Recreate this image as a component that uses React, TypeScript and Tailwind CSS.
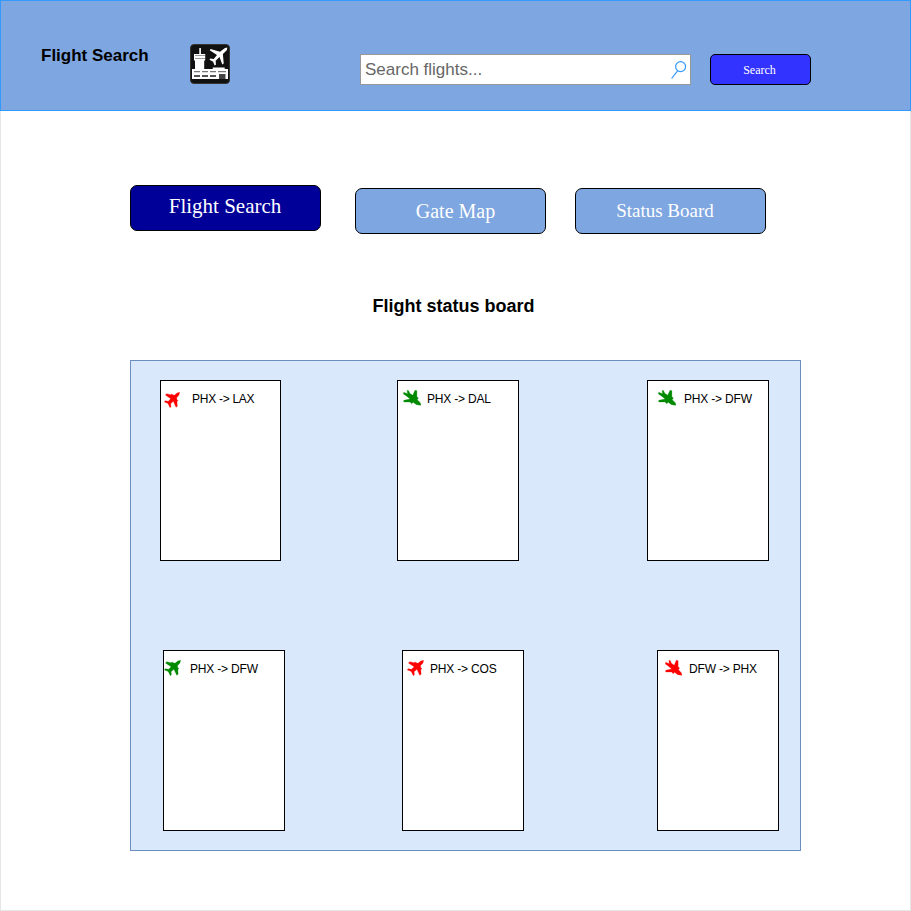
import React from "react";

type Direction = "up" | "down";

function Plane({ direction, className }: { direction: Direction; className: string }) {
  return (
    <svg viewBox="0 0 48 48" preserveAspectRatio="none" className={`block shrink-0 ${className}`} fill="currentColor" stroke="currentColor" strokeWidth="0.8" strokeLinejoin="round">
      {direction === "up" ? (
        <path d="M47 1 L39 3 L31 10 L26 8 L23 6 L20 8 L8 5 L4 9 L20 20 L13 28 L3 26 L1 30 L11 34 L13 37 L18 47 L21 44 L20 35 L28 28 L36 46 L40 43 L39 29 L42 26 L39 23 L38 17 L45 9 Z" />
      ) : (
        <path d="M48 46 L46 38 L38 29 L41 24 L37 20 L37 2 L32 1 L26 16 L18 10 L15 2 L11 1 L12 11 L2 7 L1 12 L9 18 L19 27 L2 31 L2 36 L19 36 L23 41 L27 37 L36 44 Z" />
      )}
    </svg>
  );
}

function FlightCard({ route, direction, card, plane, text }: { route: string; direction: Direction; card: string; plane: string; text: string }) {
  return (
    <article className={`flex h-[181px] items-start border border-black bg-white ${card}`}>
      <Plane direction={direction} className={plane} />
      <span className={`mt-[10px] whitespace-nowrap text-[12px] leading-4 ${text}`}>{route}</span>
    </article>
  );
}

function AirportIcon() {
  return (
    <svg viewBox="0 0 40 40" className="ml-[41px] mt-[43px] block size-10">
      <rect x=".5" y=".5" width="39" height="39" rx="3.5" fill="#111" stroke="#333" />
      <path d="M9.3 4h1.6v6h4.3v6l-1 1v8h8.5v-1.5h12V25H38v10H2V25h3v-8l-1-1v-6h5.3z" fill="#fff" />
      <path d="M5 11.5h10M5 14.5h10" stroke="#999" strokeWidth="1.2" />
      <path d="M4 27.6h6M12 27.6h6M20 27.6h6M28 27.6h8" stroke="#777" strokeWidth="1.2" />
      <path d="M4 32h6M12 32h6M20 32h6" stroke="#555" strokeWidth="2" />
      <path d="M29 30h6.5v5H29z" fill="#444" />
      <path d="M37.3 3.5 35 4l-5 3.8L20.5 5l-.8 1.2L27 11l-3.3 4-3.5-.5-.7 1.2 3.6 2 1.5 3.8 1.3-.8-.2-4L29.5 13l2.8 7.5 1.4-1-.8-9.5L37 6z" fill="#fff" />
    </svg>
  );
}

export default function App() {
  return (
    <div className="h-[911px] w-[911px] overflow-hidden bg-white font-['Liberation_Sans',Arial,sans-serif] text-black">
      <header className="flex h-[111px] items-start border border-[#3399ff] bg-[#7ea6e0]">
        <h1 className="ml-10 mt-[45px] w-[108px] whitespace-nowrap text-[17px] font-bold leading-5">Flight Search</h1>
        <AirportIcon />
        <div className="ml-[130px] mt-[53px] flex h-[31px] w-[331px] items-center border border-[#999] bg-white pl-1 text-[17px] text-[#666]">
          <span className="grow">Search flights...</span>
          <svg viewBox="0 0 16 18" className="mr-[3px] h-[18px] w-4" fill="none" stroke="#3399ff" strokeWidth="1.2">
            <circle cx="9.6" cy="5.6" r="5" />
            <path d="m6.6 9.8-6 7.7" />
          </svg>
        </div>
        <button className="ml-[19px] mt-[53px] h-[31px] w-[101px] rounded-[5px] border border-black bg-[#3333ff] pr-[2px] font-['Liberation_Serif',serif] text-[12px] text-white">Search</button>
      </header>
      <main className="h-[800px] border-x border-b border-[#e6e6e6] px-[129px]">
        <nav className="flex items-start pt-[74px] font-['Liberation_Serif',serif] text-white">
          <button className="h-[46px] w-[191px] rounded-[7px] border border-black bg-[#000099] pb-[2px] pr-px text-[21px]">Flight Search</button>
          <button className="ml-[34px] mt-[3px] h-[46px] w-[191px] rounded-[7px] border border-black bg-[#7ea6e0] pl-[10px] text-[20px]">Gate Map</button>
          <button className="ml-[29px] mt-[3px] h-[46px] w-[191px] rounded-[7px] border border-black bg-[#7ea6e0] pr-[11px] pt-px text-[19px]">Status Board</button>
        </nav>
        <h2 className="ml-[242.5px] mt-[61px] h-[22px] whitespace-nowrap text-[18px] font-bold leading-[22px]">Flight status board</h2>
        <section className="mt-[43px] h-[491px] w-[671px] border border-[#6c8ebf] bg-[#dae8fc] pt-[19px]">
          <div className="flex">
            <FlightCard route="PHX -> LAX" direction="up" card="ml-[29px] w-[121px]" plane="ml-[3px] mt-[11px] size-4 text-[#ff0000]" text="ml-3 tracking-[-0.27px]" />
            <FlightCard route="PHX -> DAL" direction="down" card="ml-[116px] w-[122px]" plane="ml-[5px] mt-[9px] h-4 w-[18px] text-[#008a00]" text="ml-[6px] tracking-[-0.2px]" />
            <FlightCard route="PHX -> DFW" direction="down" card="ml-[128px] w-[122px]" plane="ml-[10px] mt-[9px] h-4 w-[18px] text-[#008a00]" text="ml-2 tracking-[-0.18px]" />
          </div>
          <div className="mt-[89px] flex">
            <FlightCard route="PHX -> DFW" direction="up" card="ml-[32px] w-[122px]" plane="mt-[9px] h-4 w-[17px] text-[#008a00]" text="ml-[9px] tracking-[-0.18px]" />
            <FlightCard route="PHX -> COS" direction="up" card="ml-[117px] w-[122px]" plane="ml-1 mt-[9px] h-4 w-[17px] text-[#ff0000]" text="ml-[6px] tracking-[-0.18px]" />
            <FlightCard route="DFW -> PHX" direction="down" card="ml-[133px] w-[122px]" plane="ml-[7px] mt-[9px] h-4 w-[17px] text-[#ff0000]" text="ml-[7px] tracking-[-0.18px]" />
          </div>
        </section>
      </main>
    </div>
  );
}
